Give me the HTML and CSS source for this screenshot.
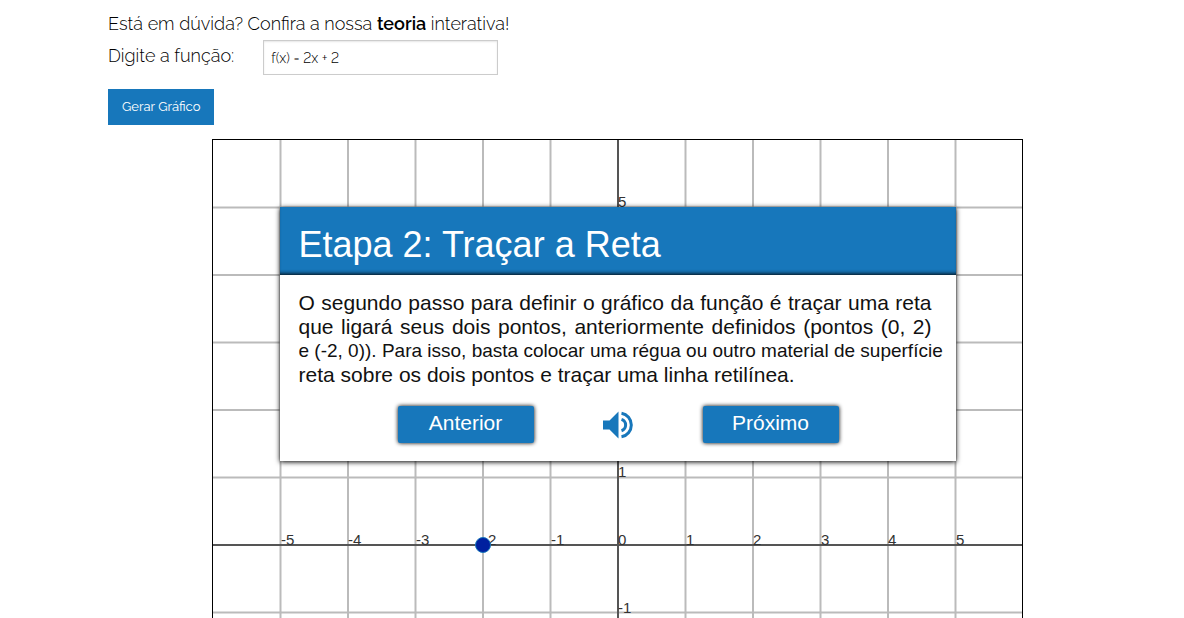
FILE: index.html
```html
<!DOCTYPE html>
<html lang="pt-BR">
<head>
<meta charset="utf-8">
<meta name="viewport" content="width=device-width, initial-scale=1">
<title>Gerador de gráficos</title>
<link rel="stylesheet" href="styles.css">
</head>
<body>
<main class="page">
  <p class="intro">Está em dúvida? Confira a nossa <a class="theory" href="#teoria">teoria</a> interativa!</p>
  <form class="form">
    <div class="field">
      <label class="label" for="funcao">Digite a função:</label>
      <input class="input" id="funcao" type="text" value="f(x) = 2x + 2">
    </div>
    <button class="generate" type="button">Gerar Gráfico</button>
  </form>
  <div class="chart">
    <svg class="plane" viewBox="0 0 811 811" role="img" aria-label="Plano cartesiano">
      <path class="grid" d="M68.500 1V810M136 1V810M203.500 1V810M271 1V810M338.500 1V810M473.500 1V810M541 1V810M608.500 1V810M676 1V810M743.500 1V810M1 68.500H810M1 136H810M1 203.500H810M1 271H810M1 338.500H810M1 473.500H810M1 541H810M1 608.500H810M1 676H810M1 743.500H810"/>
      <path class="axis" d="M406 1V810M1 406H810"/>
      <g class="ticks">
        <text x="69" y="406">-5</text><text x="136" y="406">-4</text><text x="204" y="406">-3</text><text x="271" y="406">-2</text><text x="339" y="406">-1</text><text x="406" y="406">0</text><text x="474" y="406">1</text><text x="541" y="406">2</text><text x="609" y="406">3</text><text x="676" y="406">4</text><text x="744" y="406">5</text>
        <text x="406" y="68">5</text><text x="406" y="338">1</text><text x="406" y="474">-1</text><text x="406" y="541">-2</text><text x="406" y="609">-3</text><text x="406" y="676">-4</text><text x="406" y="744">-5</text>
      </g>
      <circle class="point" cx="271" cy="406" r="7.500"/>
      <rect class="frame" x="0.500" y="0.500" width="810" height="810"/>
    </svg>
    <section class="dialog" aria-labelledby="titulo">
      <h2 class="title" id="titulo">Etapa 2: Traçar a Reta</h2>
      <div class="body">
        <p class="text">
          <span class="line">O segundo passo para definir o gráfico da função é traçar uma reta</span>
          <span class="line">que ligará seus dois pontos, anteriormente definidos (pontos (0, 2)</span>
          <span class="line narrow">e (-2, 0)). Para isso, basta colocar uma régua ou outro material de superfície</span>
          <span class="line last">reta sobre os dois pontos e traçar uma linha retilínea.</span>
        </p>
        <div class="actions">
          <button class="step" type="button">Anterior</button>
          <button class="audio" type="button" aria-label="Ouvir">
            <svg class="speaker" viewBox="0 0 31 28" aria-hidden="true">
              <path fill="#1777bb" d="M0 9.500H6.500L15.500 0.500V27.500L6.500 18.500H0Z"/>
              <path fill="none" stroke="#1777bb" stroke-width="3" d="M18.500 2.200A12 12 0 0 1 18.500 25.800M18.500 8.300A6 6 0 0 1 18.500 19.700"/>
            </svg>
          </button>
          <button class="step" type="button">Próximo</button>
        </div>
      </div>
    </section>
  </div>
</main>
</body>
</html>
```
FILE: styles.css
```css
* {
  box-sizing: border-box;
}

html {
  scrollbar-width: none;
}

body {
  margin: 0;
  background: #fff;
  color: #000;
  font-family: Raleway, Lato, sans-serif;
  font-weight: 300;
}

.page {
  padding: 8px 57px 0 108px;
}

.intro {
  margin: 0;
  font-size: 18px;
  line-height: 32px;
}

.theory {
  color: #000;
  font-weight: 600;
  text-decoration: none;
}

.field {
  display: flex;
  gap: 29px;
}

.label {
  font-size: 18px;
  line-height: 32px;
}

.input {
  width: 235px;
  height: 35px;
  padding: 0 7px;
  border: 1px solid #ccc;
  border-radius: 0;
  background: #fff;
  box-shadow: inset 0 1px 2px rgba(0, 0, 0, 0.1);
  color: #000;
  font: 300 14px Raleway, Lato, sans-serif;
  font-variant-numeric: lining-nums;
}

.generate {
  display: block;
  height: 36px;
  margin-top: 14px;
  padding: 0 14px 2px;
  border: 0;
  background: #1777bb;
  color: #fff;
  font: 400 13px Raleway, Lato, sans-serif;
}

.chart {
  position: relative;
  max-width: 811px;
  margin: 14px auto 0;
  font-family: "Liberation Sans", Arial, sans-serif;
  font-weight: 400;
}

.plane {
  display: block;
  width: 100%;
}

.grid {
  stroke: #bbb;
  stroke-width: 2;
}

.axis {
  stroke: #555;
  stroke-width: 2;
}

.ticks {
  fill: #333;
  font-size: 15px;
}

.point {
  fill: #00209f;
  stroke: #1777bb;
}

.frame {
  fill: none;
  stroke: #000;
}

.dialog {
  position: absolute;
  top: 68px;
  left: 50%;
  width: 676px;
  max-width: 100%;
  transform: translateX(-50%);
  background: #fff;
  box-shadow: 0 1px 5px #000;
}

.title {
  margin: 0;
  padding: 7px 19px 0;
  background: #1777bb;
  box-shadow: inset 0 -4px 4px -3px #000;
  color: #fff;
  font-size: 36px;
  font-weight: 400;
  line-height: 61px;
}

.body {
  padding: 16px 24px 18px 19px;
}

.text {
  margin: 0;
  color: #111;
  font-size: 21px;
  line-height: 24px;
}

.line {
  display: block;
  text-align-last: justify;
  white-space: nowrap;
}

.narrow {
  font-size: 19px;
}

.last {
  text-align-last: left;
}

.actions {
  display: flex;
  justify-content: center;
  align-items: center;
  gap: 69px;
  margin-top: 19px;
  padding-left: 6px;
}

.step {
  width: 136px;
  height: 37px;
  padding: 0 0 3px;
  border: 0;
  border-radius: 2px;
  background: #1777bb;
  box-shadow: 0 0 4px #000;
  color: #fff;
  font: 400 21px "Liberation Sans", Arial, sans-serif;
}

.audio {
  padding: 0;
  border: 0;
  background: none;
}

.speaker {
  display: block;
  width: 31px;
  height: 28px;
}
```
